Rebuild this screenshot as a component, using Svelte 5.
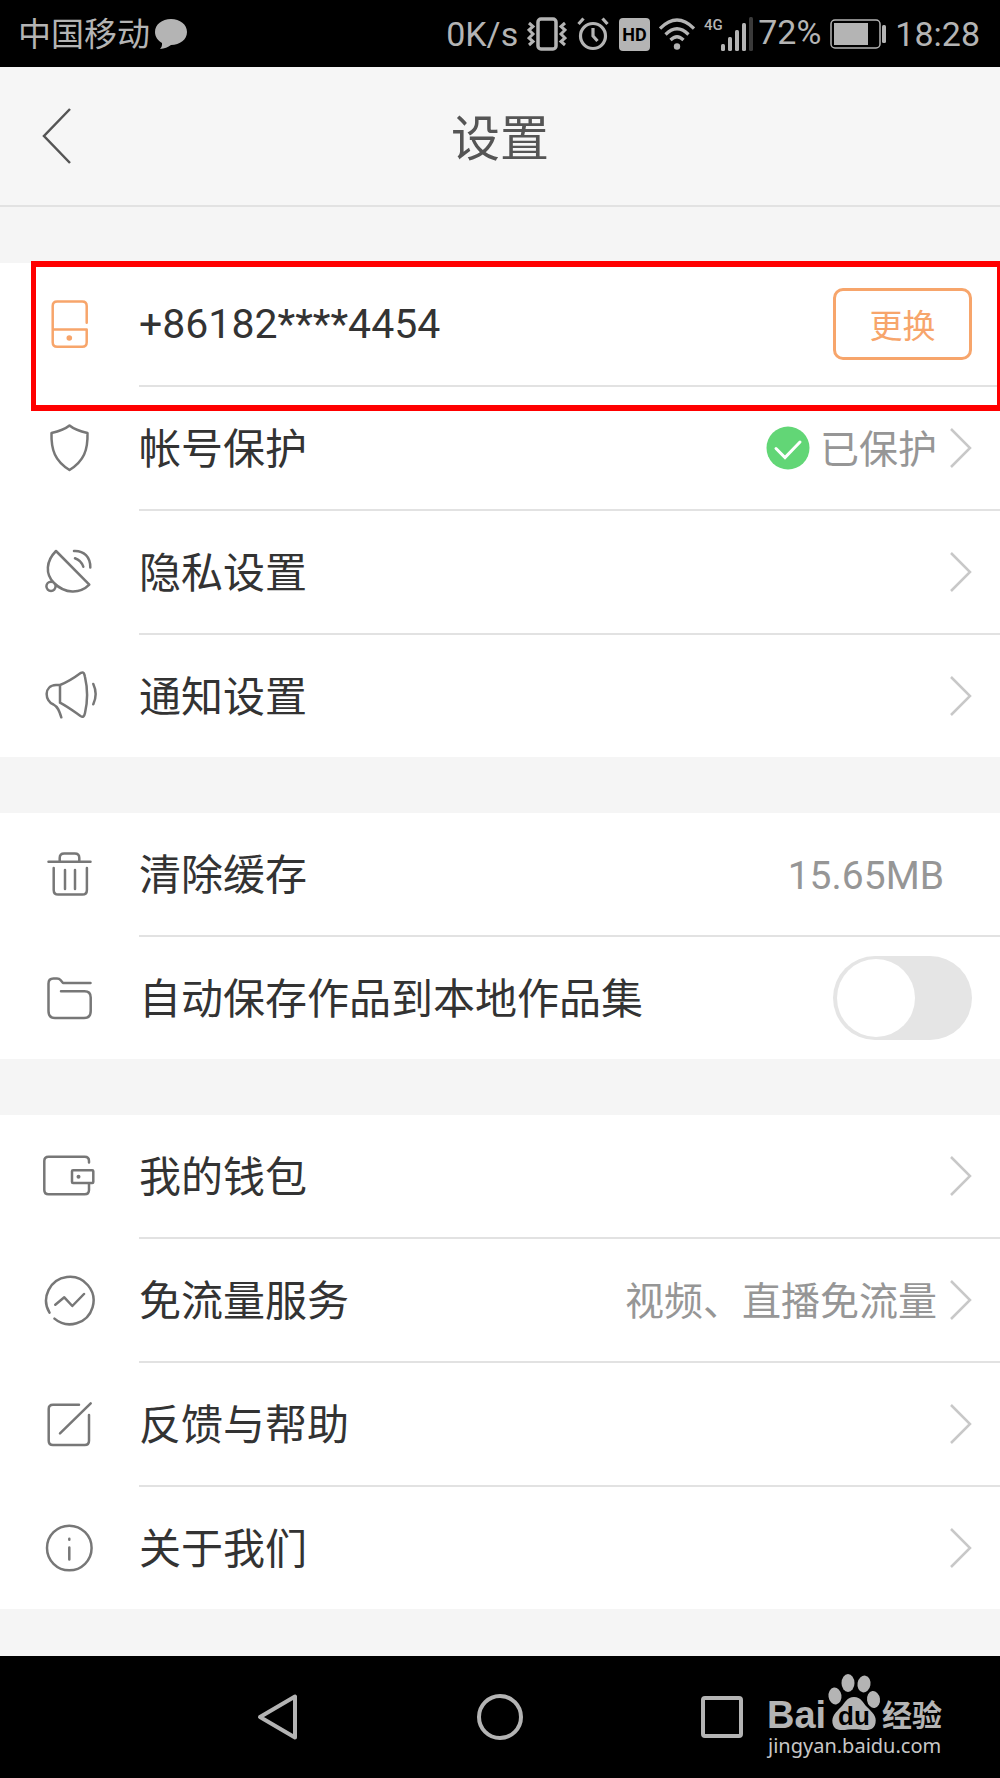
<script lang="ts">
  type Row = {
    id: string;
    label: string;
    value?: string;
    kind: 'phone' | 'link' | 'cache' | 'switch';
    safe?: boolean;
  };

  const groups: Row[][] = [
    [
      { id: 'phone', label: '+86182****4454', kind: 'phone' },
      { id: 'protect', label: '帐号保护', value: '已保护', kind: 'link', safe: true },
      { id: 'privacy', label: '隐私设置', kind: 'link' },
      { id: 'notice', label: '通知设置', kind: 'link' },
    ],
    [
      { id: 'cache', label: '清除缓存', value: '15.65MB', kind: 'cache' },
      { id: 'autosave', label: '自动保存作品到本地作品集', kind: 'switch' },
    ],
    [
      { id: 'wallet', label: '我的钱包', kind: 'link' },
      { id: 'traffic', label: '免流量服务', value: '视频、直播免流量', kind: 'link' },
      { id: 'feedback', label: '反馈与帮助', kind: 'link' },
      { id: 'about', label: '关于我们', kind: 'link' },
    ],
  ];

  // stroked outlines, 56x56 grid
  const icons: Record<string, string> = {
    phone:
      'M45.7 26.7V10q0-4.5-4.5-4.5h-25q-4.5 0-4.5 4.5v36.2q0 4.5 4.5 4.5h25q4.5 0 4.5-4.5V33.5h-34',
    protect:
      'M28.5 5.5C23 10 17 11.5 10.5 13C10 30 14 41 28.5 50C43 41 47 30 46.5 13C40 11.5 34 10 28.5 5.5Z',
    privacy:
      'M15 7C5 17 4 30 13 39C24 50 39 50 48.3 40.7ZM33 7C43 6.5 49.5 13 49.3 23.5M34 14.3C37.5 15.5 41 19 42.3 22.7M5.4 42.3a4.6 4.6 0 1 0 9.2 0a4.6 4.6 0 1 0-9.2 0',
    notice:
      'M19 17C27 14 33 10 40 4.8C42.5 3.5 43.3 5.5 44 9C46.8 21 46.8 33 44 45C43.3 48.5 42 49.5 39.5 48C33 43.5 27 39 19 34.7V17H15C2.5 17.5 3.5 33 12.5 36.5C16.5 38.5 18 42 20.3 49.3M52.3 16Q57 26 52.3 36.3',
    cache:
      'M7.5 15.7h42M18.7 15.7V12q0-4.5 4.5-4.5h10.6q4.5 0 4.5 4.5v3.7M12.7 22v22q0 4.6 4.6 4.6h24q4.6 0 4.6-4.6V22M24 24v19M34 24v19',
    autosave:
      'M49.5 13H22L19.5 10Q18.3 8.5 16 8.5H12.5Q7.5 8.5 7.5 13.5V41Q7.5 48 14 48H43Q49.7 48 49.7 41V27.5Q49.7 21.3 43.5 21.3H20',
    wallet:
      'M48 14.5V13q0-4.3-4.3-4.3H7.6q-4.3 0-4.3 4.3v29q0 4.3 4.3 4.3h36.1q4.3 0 4.3-4.3v-7M32 22.3h19.3q1 0 1 1V34q0 1-1 1H32q-1 0-1-1V23.3q0-1 1-1Z',
    traffic:
      'M8.5 40.7A23.7 23.7 0 1 1 13.5 46.6M14.3 32.7L23.3 25.3L31.3 34L43 22',
    feedback:
      'M38 8.7H12q-4.3 0-4.3 4.3v31.7q0 4.3 4.3 4.3h31.7q4.3 0 4.3-4.3V19M49.7 7.3L19 37.3',
    about:
      'M6 28a22.3 22.3 0 1 0 44.6 0a22.3 22.3 0 1 0-44.6 0M28.3 18.7v1M28.3 27.5v12',
  };

  let autosave = $state(false);
</script>

{#snippet icon(id: string)}
  <svg class="icon" class:orange={id === 'phone'} viewBox="0 0 56 56" aria-hidden="true">
    <path d={icons[id]} />
    {#if id === 'phone'}
      <circle class="dot" cx="28.3" cy="42" r="2.8" />
    {:else if id === 'wallet'}
      <circle class="dot" cx="37.5" cy="28.7" r="2" />
    {/if}
  </svg>
{/snippet}

<div class="screen">
  <div class="status">
    <div class="carrier">
      <span class="operator">中国移动</span>
      <svg width="32" height="30" viewBox="0 0 32 30" aria-hidden="true">
        <path
          d="M16 0C25 0 32 5.500 32 13C32 20.500 25 26 16 26C13 28.500 9.500 29.500 5 30C6.500 28.500 7.300 26.500 7 24C3 21.500 0 18 0 13C0 5.500 7 0 16 0Z"
          fill="#b4b4b4"
        />
      </svg>
    </div>
    <div class="indicators">
      <span>0K/s</span>
      <svg width="40" height="34" viewBox="0 0 40 34" fill="none" stroke="#b4b4b4" aria-hidden="true">
        <rect x="11" y="2" width="18" height="30" rx="3" stroke-width="3.500" />
        <path
          d="M2 6l4 3.500l-4 3.500l4 4l-4 4l4 3.500l-4 3.500M38 6l-4 3.500l4 3.500l-4 4l4 4l-4 3.500l4 3.500"
          stroke-width="3"
        />
      </svg>
      <svg width="34" height="34" viewBox="0 0 34 34" fill="none" stroke="#b4b4b4" stroke-width="3.200" aria-hidden="true">
        <circle cx="17" cy="19" r="12.500" />
        <path d="M17 11v8l4.500 5M2.500 7l5-5.500M31.500 7l-5-5.500" />
      </svg>
      <svg width="31" height="33" viewBox="0 0 31 33" aria-hidden="true">
        <rect width="31" height="33" rx="4" fill="#b4b4b4" />
        <text class="hd" x="15.500" y="23" text-anchor="middle">HD</text>
      </svg>
      <svg width="36" height="33" viewBox="0 0 36 33" fill="none" stroke="#b4b4b4" stroke-width="3.200" aria-hidden="true">
        <path d="M1 10.500Q18-6.500 35 10.500M6.500 16.500Q18 5 29.500 16.500M11.500 22Q18 15.500 24.500 22" />
        <circle cx="18" cy="28.500" r="3.200" fill="#b4b4b4" stroke="none" />
      </svg>
      <div class="signal">
        <svg width="50" height="34" viewBox="0 0 50 34" aria-hidden="true">
          <text class="net" x="0" y="13">4G</text>
          <g fill="#b4b4b4">
            <rect x="17" y="27" width="4" height="7" rx="1.500" />
            <rect x="24" y="20" width="4" height="14" rx="1.500" />
            <rect x="31" y="13" width="4" height="21" rx="1.500" />
            <rect x="38" y="6" width="4" height="28" rx="1.500" />
          </g>
          <rect x="45" y="0" width="4" height="34" rx="1.500" fill="#3a3a3a" />
        </svg>
        <span class="percent">72%</span>
      </div>
      <svg width="56" height="30" viewBox="0 0 56 30" aria-hidden="true">
        <rect x="1" y="1" width="49" height="28" rx="4" fill="none" stroke="#b4b4b4" stroke-width="1.500" />
        <rect x="4" y="4" width="34" height="22" fill="#b4b4b4" />
        <rect x="52" y="6" width="4" height="18" rx="1.500" fill="#b4b4b4" />
      </svg>
      <span>18:28</span>
    </div>
  </div>

  <header class="header">
    <button class="back" type="button" aria-label="返回">
      <svg width="30" height="58" viewBox="0 0 30 58" aria-hidden="true">
        <path d="M28 2L2 29L28 56" fill="none" stroke="#555" stroke-width="2.500" />
      </svg>
    </button>
    <h1>设置</h1>
  </header>

  <main>
    {#each groups as group}
      <ul class="group">
        {#each group as row}
          <li>
            {#if row.kind === 'link'}
              <a class="row" href="#{row.id}">
                {@render icon(row.id)}
                <span class="body">
                  <span class="label">{row.label}</span>
                  {#if row.safe}
                    <svg class="check" viewBox="0 0 44 44" aria-hidden="true">
                      <circle cx="22" cy="22" r="21.500" fill="#62d676" />
                      <path d="M10 22.500L19 31.500L34 16" />
                    </svg>
                  {/if}
                  {#if row.value}
                    <span class="value">{row.value}</span>
                  {/if}
                  <svg class="chevron" viewBox="0 0 22 40" aria-hidden="true">
                    <path d="M1 1L20 20L1 39" />
                  </svg>
                </span>
              </a>
            {:else if row.kind === 'phone'}
              <div class="row">
                {@render icon(row.id)}
                <div class="body">
                  <span class="number">{row.label}</span>
                  <button class="change" type="button">更换</button>
                </div>
                <div class="highlight"></div>
              </div>
            {:else if row.kind === 'cache'}
              <button class="row" type="button">
                {@render icon(row.id)}
                <span class="body">
                  <span class="label">{row.label}</span>
                  <span class="value size">{row.value}</span>
                </span>
              </button>
            {:else}
              <label class="row">
                {@render icon(row.id)}
                <span class="body">
                  <span class="label">{row.label}</span>
                  <input class="switch" type="checkbox" role="switch" bind:checked={autosave} />
                </span>
              </label>
            {/if}
          </li>
        {/each}
      </ul>
    {/each}
  </main>

  <nav class="nav">
    <button type="button" aria-label="后退">
      <svg width="48" height="48" viewBox="0 0 48 48">
        <path d="M41 3.500V44.500L6 24Z" />
      </svg>
    </button>
    <button type="button" aria-label="主页">
      <svg width="48" height="48" viewBox="0 0 48 48">
        <circle cx="24" cy="24" r="21" />
      </svg>
    </button>
    <button type="button" aria-label="最近任务">
      <svg width="48" height="48" viewBox="0 0 48 48">
        <rect x="5" y="5" width="38" height="38" rx="2" />
      </svg>
    </button>
    <div class="watermark">
      <svg width="178" height="60" viewBox="0 0 178 60" fill="#b4b4b4">
        <text class="bai" x="-1" y="54">Bai</text>
        <ellipse cx="67" cy="22" rx="6.500" ry="8.500" transform="rotate(-8 67 22)" />
        <ellipse cx="80" cy="9" rx="6.500" ry="9" />
        <ellipse cx="96" cy="10" rx="6.500" ry="8.500" transform="rotate(10 96 10)" />
        <ellipse cx="105.500" cy="25.500" rx="6.500" ry="8.500" transform="rotate(-8 105.500 25.500)" />
        <path
          d="M86 23C93 23 95 29 99 33C104 38 109 42 107.500 49C106 57 98 56.500 92 55.500C88 55 84 55 80 55.500C73 56.500 66 57 64.500 49C63.500 42 68 38 73 33C77 29 79 23 86 23Z"
        />
        <text class="du" x="86" y="51" text-anchor="middle">du</text>
        <text class="exp" x="114" y="52">经验</text>
      </svg>
      <span class="site">jingyan.baidu.com</span>
    </div>
  </nav>
</div>

<style>
  :global(body) {
    margin: 0;
    background: #f5f5f5;
  }

  .screen {
    font-family: Roboto, 'Noto Sans CJK SC', sans-serif;
    color: #333;
    overflow: hidden;
  }

  button {
    border: 0;
    padding: 0;
    background: none;
    font: inherit;
    color: inherit;
    cursor: pointer;
  }

  svg {
    display: block;
    flex: none;
  }

  .status {
    display: flex;
    align-items: center;
    justify-content: space-between;
    height: 67px;
    padding: 0 20px 0 18px;
    box-sizing: border-box;
    background: #000;
    color: #b4b4b4;
    font-size: 34px;
    line-height: 40px;
    white-space: nowrap;
  }

  .carrier {
    display: flex;
    align-items: center;
    gap: 5px;
  }

  .operator {
    padding-top: 3px;
    font-size: 33px;
  }

  .indicators {
    display: flex;
    align-items: center;
    gap: 9px;
    padding-top: 1px;
  }

  .signal {
    display: flex;
    align-items: center;
    gap: 4px;
  }

  .percent {
    padding-bottom: 4px;
  }

  .hd {
    font-size: 18px;
    font-weight: 700;
    fill: #000;
  }

  .net {
    font-size: 15px;
    font-weight: 500;
    fill: #b4b4b4;
  }

  .header {
    display: grid;
    grid-template-columns: 1fr auto 1fr;
    align-items: center;
    height: 140px;
    box-sizing: border-box;
    border-bottom: 2px solid #e2e2e2;
    background: #f6f6f6;
  }

  .back {
    justify-self: start;
    padding-left: 42px;
  }

  h1 {
    margin: 0;
    padding-top: 8px;
    font-size: 49px;
    font-weight: 400;
    line-height: 60px;
    color: #555;
  }

  main {
    padding: 56px 0 47px;
    display: flex;
    flex-direction: column;
    gap: 56px;
  }

  .group {
    margin: 0;
    padding: 0;
    list-style: none;
    background: #fff;
  }

  .row {
    position: relative;
    display: flex;
    align-items: stretch;
    gap: 42px;
    width: 100%;
    box-sizing: border-box;
    padding-left: 41px;
    color: inherit;
    text-align: left;
    text-decoration: none;
  }

  .icon {
    width: 56px;
    height: 56px;
    margin-top: 33px;
    fill: none;
    stroke: #777;
    stroke-width: 2.5;
    stroke-linecap: round;
    stroke-linejoin: round;
  }

  .icon.orange {
    stroke: #f7a56b;
  }

  .dot {
    fill: #777;
    stroke: none;
  }

  .orange .dot {
    fill: #f7a56b;
  }

  .body {
    flex: 1;
    display: flex;
    align-items: center;
    height: 122px;
    padding-right: 28px;
    border-bottom: 2px solid #e2e2e2;
  }

  li:last-child .body {
    border-bottom: 0;
  }

  .label {
    flex: 1;
    padding-top: 3px;
    font-size: 42px;
    line-height: 60px;
  }

  .number {
    flex: 1;
    font-size: 41px;
    line-height: 60px;
  }

  .value {
    padding-top: 3px;
    font-size: 39px;
    line-height: 60px;
    color: #969696;
  }

  .size {
    padding-right: 28px;
  }

  .check {
    width: 44px;
    height: 44px;
    margin-right: 10px;
  }

  .check path {
    fill: none;
    stroke: #fff;
    stroke-width: 3;
    stroke-linecap: round;
  }

  .chevron {
    width: 22px;
    height: 40px;
    margin-left: 13px;
  }

  .chevron path {
    fill: none;
    stroke: #c8c8c8;
    stroke-width: 2.5;
  }

  .change {
    width: 139px;
    height: 72px;
    border: 3px solid #f7a56b;
    border-radius: 10px;
    color: #f7a56b;
    font-size: 33px;
  }

  .highlight {
    position: absolute;
    top: -2px;
    left: 31px;
    right: 0;
    height: 138px;
    border: 6px solid #f00;
    border-left-width: 5px;
    border-right-width: 3px;
    pointer-events: none;
    z-index: 1;
  }

  .switch {
    appearance: none;
    display: flex;
    width: 139px;
    height: 84px;
    margin: 0;
    padding: 3px 4px;
    box-sizing: border-box;
    border-radius: 42px;
    background: #e5e5e5;
    cursor: pointer;
  }

  .switch::before {
    content: '';
    width: 78px;
    height: 78px;
    border-radius: 50%;
    background: #fff;
  }

  .switch:checked {
    justify-content: flex-end;
    background: #62d676;
  }

  .nav {
    position: relative;
    display: grid;
    grid-template-columns: repeat(3, 1fr);
    align-items: center;
    justify-items: center;
    height: 122px;
    padding: 0 16.7%;
    background: #000;
  }

  .nav button svg {
    fill: none;
    stroke: #b4b4b4;
    stroke-width: 4;
    stroke-linejoin: round;
  }

  .watermark {
    position: absolute;
    right: 54px;
    bottom: 20px;
  }

  .watermark svg {
    overflow: visible;
  }

  .bai {
    font-family: 'Liberation Sans', sans-serif;
    font-size: 38px;
    font-weight: 700;
  }

  .du {
    font-family: 'Liberation Sans', sans-serif;
    font-size: 26px;
    font-weight: 700;
    fill: #000;
  }

  .exp {
    font-size: 30px;
    font-weight: 700;
  }

  .site {
    display: block;
    font-family: 'Noto Sans', sans-serif;
    font-size: 20px;
    line-height: 24px;
    color: #c8c8c8;
  }
</style>
